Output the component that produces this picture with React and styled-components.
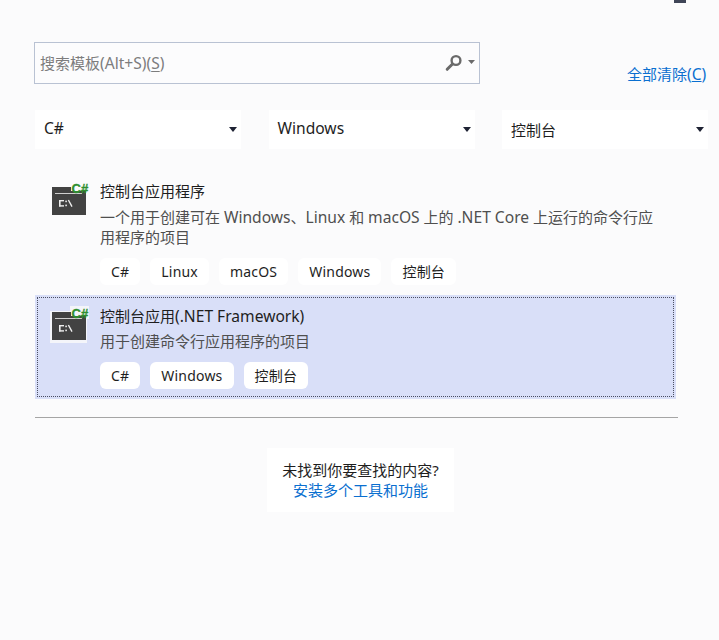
import React from "react";
import styled, { createGlobalStyle } from "styled-components";

const Global = createGlobalStyle`
  html, body { margin: 0; padding: 0; background: #fbfbfc; }
  body { font-family: "Noto Sans", "Noto Sans CJK SC", sans-serif; font-size: 15px; }
`;

const Page = styled.div`
  width: 719px;
  height: 640px;
  box-sizing: border-box;
  padding: 42px 0 0 34px;
  position: relative;
  overflow: hidden;
  background: #fbfbfc;
`;
const TopMark = styled.div`
  position: absolute;
  left: 674px;
  top: 0;
  width: 12px;
  height: 3px;
  background: #3f4557;
`;
const L = styled.span`
  font-size: 15.6px;
  line-height: 1;
`;
const SearchRow = styled.div`
  display: flex;
  align-items: flex-end;
`;
const SearchBox = styled.div`
  width: 446px;
  height: 42px;
  box-sizing: border-box;
  border: 1px solid #b9c2d3;
  background: #fcfcfd;
  display: flex;
  align-items: center;
  padding: 0 4px 0 5px;
  color: #7d7d7d;
`;
const Placeholder = styled.span`
  flex: 1;
  line-height: 20px;
  u { text-underline-offset: 2px; }
`;
const ClearLink = styled.a`
  margin-left: 147px;
  color: #0a6fd0;
  line-height: 20px;
  white-space: nowrap;
`;
const Filters = styled.div`
  display: flex;
  gap: 27.5px;
  margin: 26px 0 0 1px;
`;
const Select = styled.div`
  width: 206px;
  height: 39px;
  box-sizing: border-box;
  background: #fff;
  display: flex;
  align-items: center;
  justify-content: space-between;
  padding: 0 4px 1px 9px;
  color: #1e1e1e;
`;
const Caret = styled.svg`
  width: ${p => p.$w || 8}px;
  height: ${p => (p.$w ? 4 : 5)}px;
  fill: ${p => p.$c || "#1e2233"};
  margin: ${p => (p.$w ? "-2px 0 0 0" : "1px 0 0 0")};
`;
const Item = styled.div`
  width: 641px;
  height: ${p => (p.$selected ? 104 : 133)}px;
  box-sizing: border-box;
  margin: ${p => (p.$selected ? "0" : "13px")} 0 0 1px;
  padding: ${p => (p.$selected ? "11px" : "19px")} 0 0 16px;
  display: flex;
  position: relative;
  background: ${p => (p.$selected ? "#d9dff8" : "transparent")};
  ${p => (p.$selected ? "outline: 1px dotted #4a4e62; outline-offset: -3px;" : "")}
`;
const IconWrap = styled.div`
  width: 37px;
  height: 37px;
  flex: none;
  margin: 2px 12px 0 0;
`;
const Body = styled.div`
  width: 560px;
`;
const Title = styled.div`
  line-height: 20px;
  color: #1e1e1e;
`;
const Desc = styled.div`
  line-height: 20px;
  color: #4f4f4f;
  margin-top: ${p => (p.$tight ? 5 : 6)}px;
`;
const Tags = styled.div`
  display: flex;
  gap: 10px;
  margin-top: 11px;
`;
const Tag = styled.div`
  height: 27px;
  padding: 0 11px 1px;
  box-sizing: border-box;
  background: #fff;
  border-radius: 6px;
  display: flex;
  align-items: center;
  font-size: 14px;
  letter-spacing: 0.2px;
  color: #1e1e1e;
`;
const Divider = styled.div`
  width: 643px;
  height: 1px;
  background: #a5a5a5;
  margin: 18px 0 0 1px;
`;
const HelpWrap = styled.div`
  width: 651px;
  margin: 30px 0 0 1px;
  display: flex;
  justify-content: center;
`;
const HelpBox = styled.div`
  width: 187px;
  height: 64px;
  background: #fff;
  box-sizing: border-box;
  padding-top: 12px;
  text-align: center;
  line-height: 20px;
  color: #1e1e1e;
`;
const HelpLink = styled.a`
  display: block;
  color: #0a6fd0;
`;
const IconLabel = styled.text`
  font-family: "Liberation Sans", sans-serif;
  font-weight: 700;
  font-size: 13px;
  fill: #2f8f2f;
  stroke: #2f8f2f;
  stroke-width: 0.35px;
`;

const ConsoleIcon = ({ halo }) => (
  <svg width="37" height="37" viewBox="0 0 37 37" style={{ overflow: "visible" }}>
    {halo && <path d="M-1 3H19V-2H38V11H36V35H-1z" fill="#f4f5fa" />}
    <path d="M1 4H20V8H35V32H1z" fill="#424242" />
    <rect x="4" y="10" width="27" height="1" fill="#cfcfcf" />
    <rect x="8" y="17" width="1.6" height="6.5" fill="#eee" />
    <rect x="8" y="17" width="5" height="1.4" fill="#eee" />
    <rect x="8" y="22.2" width="5" height="1.4" fill="#eee" />
    <rect x="14.3" y="17.6" width="1.6" height="1.6" fill="#eee" />
    <rect x="14.3" y="21.6" width="1.6" height="1.6" fill="#eee" />
    <path d="M17.4 17l3.6 6.6" stroke="#eee" strokeWidth="1.4" fill="none" />
    <IconLabel x="20.5" y="9.5">C#</IconLabel>
  </svg>
);

const Down = ({ c, w }) => (
  <Caret viewBox="0 0 8 5" preserveAspectRatio="none" $c={c} $w={w}><path d="M0 0h8L4 5z" /></Caret>
);

const SearchIcon = () => (
  <svg width="18" height="18" viewBox="0 0 18 18" style={{ marginRight: 5 }}>
    <circle cx="11" cy="6.5" r="4.4" fill="none" stroke="#6a6a6a" strokeWidth="2.4" />
    <path d="M7.5 10L2.2 15.3" stroke="#6a6a6a" strokeWidth="3" strokeLinecap="round" />
  </svg>
);

export default function App() {
  return (
    <Page>
      <Global />
      <TopMark />
      <SearchRow>
        <SearchBox>
          <Placeholder>搜索模板<L>(Alt+S)(<u>S</u>)</L></Placeholder>
          <SearchIcon />
          <Down c="#6a6a6a" w={7} />
        </SearchBox>
        <ClearLink>全部清除<L>(<u>C</u>)</L></ClearLink>
      </SearchRow>
      <Filters>
        <Select><L>C#</L><Down /></Select>
        <Select><L>Windows</L><Down /></Select>
        <Select>控制台<Down /></Select>
      </Filters>
      <Item>
        <IconWrap><ConsoleIcon /></IconWrap>
        <Body>
          <Title>控制台应用程序</Title>
          <Desc>一个用于创建可在 <L>Windows</L>、<L>Linux</L> 和 <L>macOS</L> 上的 <L>.NET Core</L> 上运行的命令行应用程序的项目</Desc>
          <Tags>
            <Tag>C#</Tag><Tag>Linux</Tag><Tag>macOS</Tag><Tag>Windows</Tag><Tag>控制台</Tag>
          </Tags>
        </Body>
      </Item>
      <Item $selected>
        <IconWrap><ConsoleIcon halo /></IconWrap>
        <Body>
          <Title>控制台应用<L>(.NET Framework)</L></Title>
          <Desc $tight>用于创建命令行应用程序的项目</Desc>
          <Tags>
            <Tag>C#</Tag><Tag>Windows</Tag><Tag>控制台</Tag>
          </Tags>
        </Body>
      </Item>
      <Divider />
      <HelpWrap>
        <HelpBox>
          未找到你要查找的内容?
          <HelpLink>安装多个工具和功能</HelpLink>
        </HelpBox>
      </HelpWrap>
    </Page>
  );
}
